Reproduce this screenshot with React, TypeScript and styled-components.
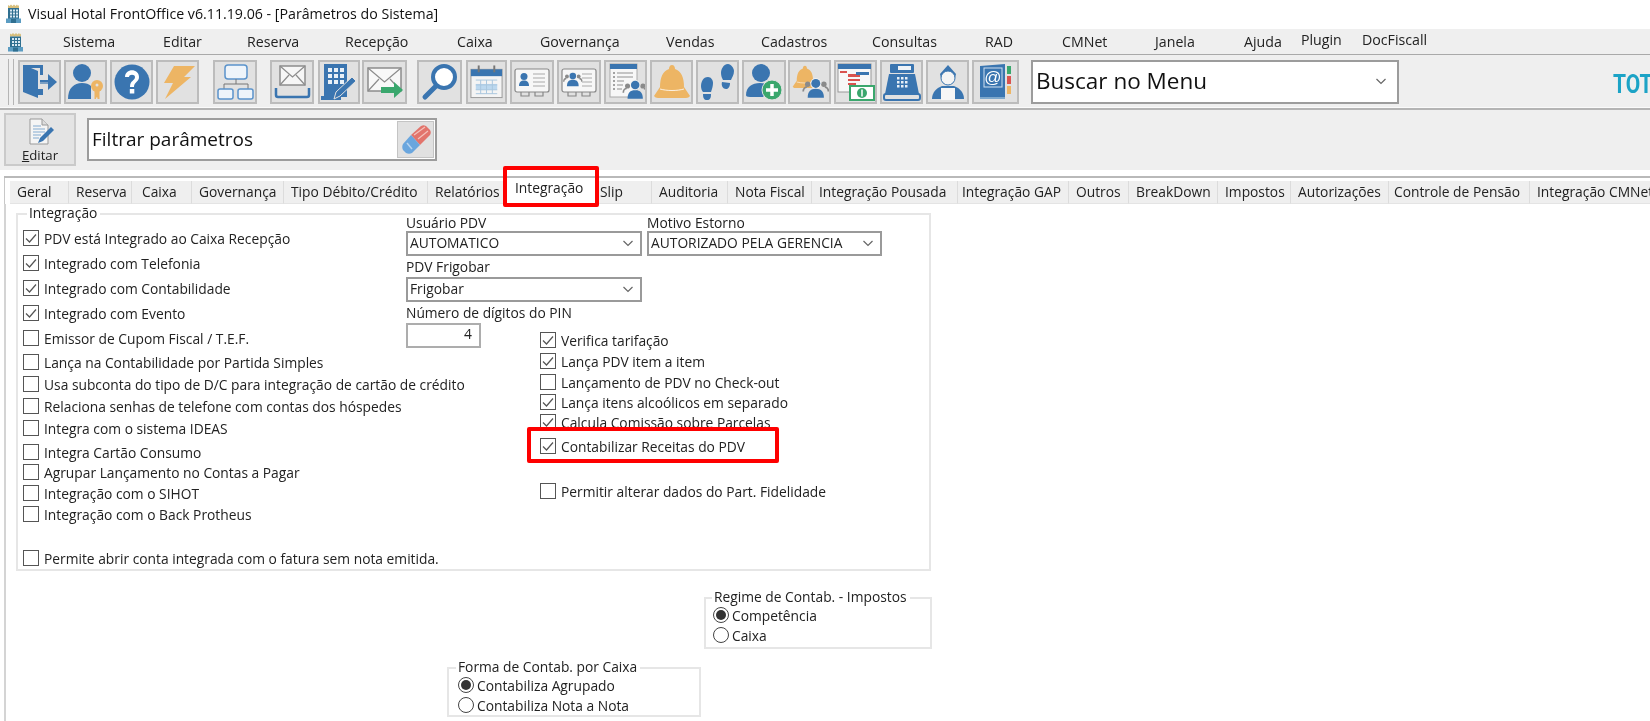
import React from "react";
import styled, { createGlobalStyle } from "styled-components";

const Global = createGlobalStyle`
  html, body { margin: 0; padding: 0; background: #fff; overflow: hidden; }
  body { font-family: "Open Sans", "Noto Sans", sans-serif; color: #222; }
`;

const Screen = styled.div`
  position: relative;
  width: 1650px;
  height: 721px;
  overflow: hidden;
  background: #fff;
  filter: blur(0.3px);
`;

const TitleBar = styled.div`
  height: 29px;
  box-sizing: border-box;
  padding: 0 0 2px 6px;
  display: flex;
  align-items: center;
  gap: 7px;
  font-size: 14.2px;
  color: #111;
  white-space: nowrap;
`;

const MenuBar = styled.div`
  height: 25px;
  display: flex;
  align-items: center;
  background: #efefef;
  border-bottom: 1px solid #a9a9a9;
  padding-left: 8px;
`;

const MenuLogo = styled.div`
  width: 55px;
  display: flex;
`;

const MenuItem = styled.div<{ $w: number; $up?: boolean }>`
  width: ${(p) => p.$w}px;
  flex: none;
  font-size: 14.2px;
  color: #222;
  white-space: nowrap;
  margin-top: ${(p) => (p.$up ? -5 : -1)}px;
`;

const ToolBar = styled.div`
  height: 53px;
  display: flex;
  align-items: center;
  background: #efefef;
  border-bottom: 2px solid #b4b4b4;
  box-shadow: inset 0 -1px 0 #fafafa;
  padding-left: 8px;
`;

const Grip = styled.div`
  width: 4px;
  height: 46px;
  border-left: 1px solid #b5b5b5;
  border-right: 1px solid #b5b5b5;
  margin-right: 4px;
  flex: none;
`;

const ToolButton = styled.div<{ $w?: number; $after?: number }>`
  width: ${(p) => p.$w ?? 43}px;
  height: 44px;
  margin-right: ${(p) => p.$after ?? 3}px;
  flex: none;
  box-sizing: border-box;
  background: #e1e1e1;
  border: 2px solid #bcbcbc;
  display: flex;
  align-items: center;
  justify-content: center;
`;

const Combo = styled.div`
  width: 368px;
  height: 44px;
  margin-left: 9px;
  flex: none;
  box-sizing: border-box;
  background: #fff;
  border: 2px solid #9c9c9c;
  display: flex;
  align-items: center;
  justify-content: space-between;
  padding: 0 10px 2px 3px;
  font-size: 22.5px;
  color: #111;
`;

const Brand = styled.div`
  margin-left: auto;
  width: 37px;
  padding-top: 6px;
  font-family: "Roboto", sans-serif;
  font-weight: 700;
  font-size: 25px;
  line-height: 30px;
  color: #1ca3c6;
  white-space: nowrap;
  transform: scaleX(0.84);
  transform-origin: left center;
`;

const FilterRow = styled.div`
  height: 60px;
  box-sizing: border-box;
  display: flex;
  align-items: center;
  background: #efefef;
  padding: 0 0 1px 4px;
`;

const EditButton = styled.div`
  width: 72px;
  height: 53px;
  box-sizing: border-box;
  background: #e4e4e4;
  border: 2px solid #cacaca;
  display: flex;
  flex-direction: column;
  align-items: center;
  justify-content: center;
  font-size: 13.2px;
  line-height: 16px;
  color: #222;
  flex: none;
`;

const HotKey = styled.span`
  text-decoration: underline;
`;

const FilterBox = styled.div`
  width: 350px;
  height: 43px;
  margin-left: 11px;
  box-sizing: border-box;
  background: #fff;
  border: 2px solid #9c9c9c;
  display: flex;
  align-items: center;
  justify-content: space-between;
  padding: 0 1px 2px 3px;
  font-size: 19px;
  color: #111;
`;

const EraserButton = styled.div`
  width: 37px;
  height: 37px;
  margin-top: 2px;
  background: #e1e1e1;
  border: 1px solid #c4c4c4;
  box-sizing: border-box;
  display: flex;
  align-items: center;
  justify-content: center;
`;

const WhiteGap = styled.div`
  height: 6px;
  background: #fff;
`;

const Rule = styled.div`
  height: 2px;
  background: #b9b9b9;
  margin-left: 4px;
`;

const TabStrip = styled.div`
  height: 26px;
  display: flex;
  align-items: flex-end;
  padding-left: 5px;
  background: #fff;
  border-left: 1px solid #c8c8c8;
  margin-left: 4px;
  box-sizing: border-box;
  overflow: hidden;
`;

const Tab = styled.div<{ $w: number; $active?: boolean; $pad?: number }>`
  width: ${(p) => p.$w}px;
  flex: none;
  box-sizing: border-box;
  height: ${(p) => (p.$active ? 26 : 23)}px;
  padding: ${(p) => (p.$active ? "1px" : "2px")} 0 0 ${(p) => p.$pad ?? 7}px;
  background: ${(p) => (p.$active ? "#fff" : "#efefef")};
  border-right: 1px solid ${(p) => (p.$active ? "#fff" : "#dcdcdc")};
  border-bottom: 1px solid ${(p) => (p.$active ? "#fff" : "#e4e4e4")};
  font-size: 13.8px;
  line-height: 18px;
  color: #222;
  white-space: nowrap;
`;

const TabBody = styled.div`
  height: 517px;
  margin-left: 4px;
  border-left: 2px solid #d4d4d4;
  padding: 9px 0 0 10px;
  box-sizing: border-box;
  background: #fff;
`;

const Group = styled.div<{ $w: number; $h: number; $left?: number; $top?: number }>`
  position: relative;
  width: ${(p) => p.$w}px;
  height: ${(p) => p.$h}px;
  margin-left: ${(p) => p.$left ?? 0}px;
  margin-top: ${(p) => p.$top ?? 0}px;
  box-sizing: border-box;
  border: 2px solid #e6e6e6;
`;

const Legend = styled.div<{ $x?: number }>`
  position: absolute;
  left: ${(p) => p.$x ?? 9}px;
  top: -10px;
  background: #fff;
  padding: 0 3px 0 2px;
  font-size: 13.8px;
  line-height: 16px;
  color: #222;
  white-space: nowrap;
`;

const GroupColumns = styled.div`
  display: flex;
  padding-left: 5px;
`;

const LeftColumn = styled.div`
  width: 383px;
  flex: none;
  padding-top: 13px;
`;

const RightColumn = styled.div`
  flex: 1;
  display: flex;
  flex-direction: column;
  gap: 3px;
  margin-top: -2px;
`;

const Row = styled.div<{ $pitch: number; $gap?: number }>`
  height: 20px;
  margin-bottom: ${(p) => p.$pitch - 20}px;
  display: flex;
  align-items: center;
  gap: ${(p) => p.$gap ?? 5}px;
  font-size: 13.8px;
  color: #222;
  white-space: nowrap;
`;

const Box = styled.span`
  width: 16px;
  height: 16px;
  flex: none;
  box-sizing: border-box;
  border: 1px solid #555;
  background: #fff;
  display: inline-flex;
  align-items: center;
  justify-content: center;
`;

const Dot = styled.span<{ $on?: boolean }>`
  width: 16px;
  height: 16px;
  flex: none;
  box-sizing: border-box;
  border: 1px solid #444;
  border-radius: 50%;
  background: #fff;
  display: inline-flex;
  align-items: center;
  justify-content: center;
  &::after {
    content: "";
    width: 10px;
    height: 10px;
    border-radius: 50%;
    background: ${(p) => (p.$on ? "#333" : "transparent")};
  }
`;

const FieldRow = styled.div`
  display: flex;
  gap: 5px;
`;

const Field = styled.div<{ $w: number }>`
  width: ${(p) => p.$w}px;
`;

const FieldLabel = styled.div<{ $first?: boolean }>`
  margin-top: ${(p) => (p.$first ? 1 : -1)}px;
  padding-bottom: ${(p) => (p.$first ? 0 : 1)}px;
  height: ${(p) => (p.$first ? 17 : 18)}px;
  font-size: 13.8px;
  line-height: 18px;
  color: #222;
  white-space: nowrap;
`;

const Select = styled.div`
  height: 25px;
  box-sizing: border-box;
  border: 2px solid #9a9a9a;
  background: #fff;
  display: flex;
  align-items: center;
  justify-content: space-between;
  padding: 0 6px 2px 2px;
  font-size: 13.8px;
  color: #222;
  white-space: nowrap;
`;

const NumberInput = styled.div`
  width: 75px;
  height: 25px;
  box-sizing: border-box;
  border: 2px solid #adadad;
  background: #fff;
  display: flex;
  align-items: center;
  justify-content: flex-end;
  padding: 0 7px 4px 0;
  font-size: 13.8px;
`;

const SecondChecks = styled.div`
  margin-left: 134px;
  margin-top: -21px;
`;

const LowerArea = styled.div`
  margin-top: 26px;
`;

const GroupBody = styled.div<{ $top: number; $left?: number }>`
  padding: ${(p) => p.$top}px 0 0 ${(p) => p.$left ?? 7}px;
`;

const Callout = styled.div<{ $x: number; $y: number; $w: number; $h: number }>`
  position: absolute;
  left: ${(p) => p.$x}px;
  top: ${(p) => p.$y}px;
  width: ${(p) => p.$w}px;
  height: ${(p) => p.$h}px;
  box-sizing: border-box;
  border: 4px solid #fe0000;
  border-radius: 2px;
  pointer-events: none;
`;

const B = "#3a75b0";
const O = "#edb564";
const G = "#3aa76d";

const Chev = ({ s = 12 }: { s?: number }) => (
  <svg width={s} height={s} viewBox="0 0 12 12" fill="none">
    <path d="M1.500 4l4.500 4.500L10.500 4" stroke="#666" strokeWidth="1.200" />
  </svg>
);

const Tick = () => (
  <svg width="14" height="14" viewBox="0 0 14 14" fill="none">
    <path d="M2 7.500l3.500 3.500L12 3.500" stroke="#555" strokeWidth="1.200" />
  </svg>
);

const Hotel = ({ w = 15, h = 19 }: { w?: number; h?: number }) => (
  <svg width={w} height={h} viewBox="0 0 15 19">
    <path d="M2 4V1l1.500 1L5 .5 6.500 2 8 .5 9.500 2 11 .5 12 2l1-1v3z" fill="#d8bf7c" />
    <rect x="2" y="4" width="11" height="14" fill="#2f6f90" />
    <rect x="0" y="14.500" width="15" height="4.500" fill="#5b9cc2" />
    <rect x="5" y="15" width="5" height="4" fill="#2f6f90" />
    {[5.5, 8.5, 11.5].map((y) =>
      [4, 7, 10].map((x) => <rect key={`${x}-${y}`} x={x} y={y} width="2" height="2" fill="#d8e8f2" />)
    )}
  </svg>
);

const I = ({ children }: { children: React.ReactNode }) => (
  <svg width="38" height="38" viewBox="0 0 38 38">
    {children}
  </svg>
);

const Person = ({ x, y, s = 1, c = B }: { x: number; y: number; s?: number; c?: string }) => (
  <g transform={`translate(${x} ${y}) scale(${s})`}>
    <circle cx="10" cy="7" r="7" fill={c} />
    <path d="M0 26c0-8 4-11 10-11s10 3 10 11z" fill={c} />
  </g>
);

const Trio = ({ x, y, s = 1 }: { x: number; y: number; s?: number }) => (
  <g transform={`translate(${x} ${y}) scale(${s})`}>
    <circle cx="3" cy="7" r="3" fill="#8a8a8a" />
    <circle cx="21" cy="7" r="3" fill="#8a8a8a" />
    <path d="M-2 15c0-3 2-5 4-5M26 15c0-3-2-5-4-5" fill="none" stroke="#8a8a8a" strokeWidth="2" />
    <circle cx="12" cy="6" r="6" fill="#f1f1f1" />
    <circle cx="12" cy="6" r="5" fill={B} />
    <path d="M3 22c0-7 3-10 9-10s9 3 9 10z" fill={B} />
  </g>
);

const Helmet = ({ x, y, s = 1 }: { x: number; y: number; s?: number }) => (
  <g transform={`translate(${x} ${y}) scale(${s})`}>
    <path d="M19 1c2 0 3 2 3 4 6 2 9 8 9 18l6 9c-1 1-2 2-4 2H5c-2 0-3-1-4-2l6-9c0-10 3-16 9-18 0-2 1-4 3-4z" fill={O} />
    <path d="M7 25c7 2 17 2 24 0" fill="none" stroke="#fff" strokeWidth="1" opacity="0.8" />
  </g>
);

const toolIcons: React.ReactNode[] = [
  <I>
    <path d="M2 2h20v10h-3V5H10l7 3v27L2 29z" fill={B} />
    <path d="M17 26h5v6h-5z" fill={B} />
    <path d="M19 17h8v-6l9 8-9 8v-6h-8z" fill={B} />
    <path d="M19 20h8" stroke="#e1e1e1" strokeWidth="0.800" />
  </I>,
  <I>
    <circle cx="15" cy="10" r="9" fill={B} />
    <path d="M1 36c0-11 6-16 14-16 4 0 7 1 9 3v13z" fill={B} />
    <circle cx="30" cy="23" r="6" fill={O} />
    <path d="M27.500 27h5v9h-2v-1.500H29V36h-1.500z" fill={O} />
    <circle cx="30" cy="22" r="1.500" fill="#e1e1e1" />
  </I>,
  <I>
    <circle cx="19" cy="19" r="17.500" fill={B} />
    <path d="M12 14c0-9 14-9 14 0 0 5-5 5-5 10h-4c0-7 5-6 5-10 0-3-6-3-6 0z" fill="#fff" />
    <rect x="16.800" y="26" width="4.500" height="4.500" fill="#fff" />
  </I>,
  <I>
    <path d="M15 3h21L25 14h7L6 36l8-16H5z" fill={O} />
  </I>,
  <I>
    <rect x="9" y="2" width="22" height="14" rx="3" fill="#eef4fa" stroke="#5b93cb" strokeWidth="1.500" />
    <path d="M20 16v5M8 26v-5h24v5" fill="none" stroke="#777" strokeWidth="1" />
    <rect x="2" y="26" width="15" height="10" rx="2" fill="#eef4fa" stroke="#5b93cb" strokeWidth="1.500" />
    <rect x="22" y="26" width="15" height="10" rx="2" fill="#eef4fa" stroke="#5b93cb" strokeWidth="1.500" />
  </I>,
  <I>
    <rect x="7" y="3" width="25" height="19" fill="#f6f6f6" stroke="#8c8c8c" strokeWidth="1.500" />
    <path d="M7 3l12.500 11L32 3M7 22l9-10M32 22l-9-10" fill="none" stroke="#8c8c8c" strokeWidth="1.200" />
    <path d="M3 25v7a2 2 0 0 0 2 2h29a2 2 0 0 0 2-2v-7" fill="none" stroke={B} strokeWidth="2.500" />
  </I>,
  <I>
    <rect x="4" y="1" width="23" height="33" fill={B} />
    <rect x="1" y="33" width="20" height="4" fill={B} />
    {[5, 11, 17].map((y) => [8, 14, 20].map((x) => <rect key={`${x}${y}`} x={x} y={y} width="4" height="4" fill="#e8f0f7" />))}
    <path d="M14 36l2-7 16-15 4 4-16 15z" fill={B} stroke="#e1e1e1" strokeWidth="1" />
  </I>,
  <I>
    <rect x="2" y="5" width="33" height="23" fill="#f8f8f8" stroke="#8c8c8c" strokeWidth="1.500" />
    <path d="M2 5l16.500 14L35 5M2 28l11-12M35 28L24 16" fill="none" stroke="#8c8c8c" strokeWidth="1.200" />
    <path d="M15 24h13v-5l9 8-9 8v-5H15z" fill={G} />
  </I>,
  <I>
    <circle cx="23" cy="14" r="11" fill="#fff" stroke={B} strokeWidth="4" />
    <path d="M15 23L4 34" stroke={B} strokeWidth="5" strokeLinecap="round" />
  </I>,
  <I>
    <rect x="3" y="6" width="32" height="29" fill="#f4f4f4" stroke="#999" />
    <rect x="3" y="6" width="32" height="7" fill={B} />
    <rect x="10" y="2" width="2" height="7" fill="#777" />
    <rect x="26" y="2" width="2" height="7" fill="#777" />
    <rect x="8" y="21" width="22" height="6" fill="#bcd8ef" />
    <path d="M8 17h22M8 22h22M8 27h22M8 31h22M13 17v14M19 17v14M25 17v14" stroke="#a9c6de" strokeWidth="1" />
  </I>,
  <I>
    <rect x="2" y="6" width="34" height="23" rx="2" fill="#f7f7f7" stroke="#888" strokeWidth="1.200" />
    <Person x={6} y={10} s={0.5} />
    <path d="M20 11h12M20 15h12M20 19h12M20 23h12" stroke="#c4c4c4" strokeWidth="1.500" />
    <path d="M8 29v4h8v-4M22 29v4h8v-4" fill="none" stroke="#888" strokeWidth="1.200" />
  </I>,
  <I>
    <rect x="2" y="6" width="34" height="23" rx="2" fill="#f7f7f7" stroke="#888" strokeWidth="1.200" />
    <Trio x={5} y={9} s={0.65} />
    <path d="M22 11h10M22 15h10M22 19h10M22 23h10" stroke="#c4c4c4" strokeWidth="1.500" />
    <path d="M8 29v4h8v-4M22 29v4h8v-4" fill="none" stroke="#888" strokeWidth="1.200" />
  </I>,
  <I>
    <rect x="3" y="1" width="27" height="33" fill="#f7f7f7" stroke="#aaa" />
    <rect x="3" y="1" width="27" height="5" fill={B} />
    <path d="M10 10h16M10 14h16M10 18h7M10 22h6M10 26h5" stroke="#b4b4b4" strokeWidth="1.500" />
    <path d="M6 10h2M6 14h2M6 18h2M6 22h2M6 26h2" stroke="#888" strokeWidth="1.500" />
    <Trio x={18} y={17} s={0.85} />
  </I>,
  <I>
    <Helmet x={0} y={1} />
  </I>,
  <I>
    <path d="M9 14c-5 0-7 5-7 9 0 3 1 5 2 6h8c1-3 2-6 2-9 0-3-2-6-5-6z" fill={B} />
    <path d="M4 31h8c0 4-1 6-4 6s-4-2-4-6z" fill={B} />
    <path d="M29 1c-5 0-7 6-7 9 0 3 1 5 2 7h8c1-3 3-5 3-9 0-3-3-7-6-7z" fill={B} />
    <path d="M23 19l8 1c0 4-2 6-4 6-3 0-5-3-4-7z" fill={B} />
  </I>,
  <I>
    <circle cx="16" cy="10" r="9" fill={B} />
    <path d="M1 32c0-8 6-12 14-12 5 0 9 2 11 4l-8 10H5c-3 0-4-1-4-2z" fill={B} />
    <circle cx="27" cy="27" r="10" fill={G} stroke="#e1e1e1" strokeWidth="1" />
    <path d="M21 27h12M27 21v12" stroke="#fff" strokeWidth="3.500" />
  </I>,
  <I>
    <Helmet x={1} y={2} s={0.68} />
    <Trio x={14} y={15} s={0.9} />
  </I>,
  <I>
    <rect x="1" y="1" width="33" height="28" fill="#f7f7f7" stroke="#999" />
    <rect x="1" y="1" width="33" height="5" fill={B} />
    <rect x="3" y="8" width="7" height="2" fill="#d9534f" />
    <rect x="11" y="11" width="12" height="3" fill="#d9534f" />
    <rect x="19" y="9" width="13" height="3" fill={B} />
    <rect x="11" y="16" width="12" height="2" fill="#d9534f" />
    <rect x="11" y="20" width="8" height="2" fill="#d9534f" />
    <rect x="13" y="23" width="24" height="14" fill="#fff" stroke={G} strokeWidth="2" />
    <circle cx="25" cy="30" r="5" fill={G} />
    <path d="M25 26.500v7" stroke="#fff" strokeWidth="1.500" />
  </I>,
  <I>
    <rect x="7" y="1" width="24" height="9" rx="1" fill={B} />
    <rect x="15" y="3" width="13" height="4" fill="#eef3f8" />
    <path d="M6 11h26l4 20H2z" fill={B} />
    {[14, 18, 22].map((y) => [14, 18, 22].map((x) => <rect key={`${x}_${y}`} x={x} y={y} width="2.500" height="2.500" fill="#e8f0f7" />))}
    <rect x="1" y="31" width="36" height="6" rx="2" fill="none" stroke={B} strokeWidth="2" />
  </I>,
  <I>
    <path d="M11 11l8-9 8 9-1 4H12z" fill={B} />
    <circle cx="19" cy="15" r="7" fill="#f4f4f4" stroke={B} strokeWidth="1" />
    <path d="M3 36c0-6 4-11 10-13h12c6 2 10 7 10 13z" fill={B} />
    <path d="M12 25h14v12H12z" fill="#f6f6f6" />
  </I>,
  <I>
    <path d="M3 3l25-2v33H3z" fill={B} />
    <rect x="3" y="34" width="25" height="2" fill="#7ea8cc" />
    <rect x="7" y="5" width="18" height="19" fill="none" stroke="#cfe0ef" strokeWidth="1" />
    <text x="16" y="20" textAnchor="middle" fontFamily="Liberation Sans, sans-serif" fontSize="17" fill="#fff">
      @
    </text>
    <rect x="30" y="3" width="4" height="8" fill={G} />
    <rect x="30" y="13" width="4" height="8" fill="#d9534f" />
    <rect x="30" y="23" width="4" height="8" fill={O} />
  </I>,
];

const toolSpec: { w?: number; after?: number }[] = [
  { w: 43 }, { w: 43 }, { w: 43 }, { w: 43, after: 14 }, { w: 44, after: 13 }, { w: 44, after: 4 },
  { w: 42, after: 2 }, { w: 45, after: 10 }, { w: 45, after: 4 }, { w: 41, after: 3 }, { w: 44, after: 3 },
  { w: 44 }, { w: 43 }, { w: 43 }, { w: 43 }, { w: 44, after: 2 }, { w: 43 }, { w: 43 }, { w: 43 }, { w: 43 }, { w: 47, after: 3 },
];

const menus: [string, number, boolean?][] = [
  ["Sistema", 100], ["Editar", 84], ["Reserva", 98], ["Recepção", 112], ["Caixa", 83], ["Governança", 126],
  ["Vendas", 95], ["Cadastros", 111], ["Consultas", 113], ["RAD", 77], ["CMNet", 93], ["Janela", 89],
  ["Ajuda", 57], ["Plugin", 61, true], ["DocFiscall", 80, true],
];

const tabs: [string, number, number?][] = [
  ["Geral", 59], ["Reserva", 63], ["Caixa", 60, 10], ["Governança", 92], ["Tipo Débito/Crédito", 144], ["Relatórios", 76],
  ["Integração", 92, 11], ["Slip", 56, 4], ["Auditoria", 76], ["Nota Fiscal", 84], ["Integração Pousada", 146], ["Integração GAP", 111, 4],
  ["Outros", 60], ["BreakDown", 89], ["Impostos", 73], ["Autorizações", 98], ["Controle de Pensão", 141, 5], ["Integração CMNet", 130],
];

const Check = ({ label, on, pitch }: { label: string; on?: boolean; pitch: number }) => (
  <Row $pitch={pitch}>
    <Box>{on && <Tick />}</Box>
    {label}
  </Row>
);

const Radio = ({ label, on, pitch }: { label: string; on?: boolean; pitch: number }) => (
  <Row $pitch={pitch} $gap={3}>
    <Dot $on={on} />
    {label}
  </Row>
);

const leftChecks: [string, boolean, number][] = [
  ["PDV está Integrado ao Caixa Recepção", true, 25],
  ["Integrado com Telefonia", true, 25],
  ["Integrado com Contabilidade", true, 25],
  ["Integrado com Evento", true, 25],
  ["Emissor de Cupom Fiscal / T.E.F.", false, 24],
  ["Lança na Contabilidade por Partida Simples", false, 22],
  ["Usa subconta do tipo de D/C para integração de cartão de crédito", false, 22],
  ["Relaciona senhas de telefone com contas dos hóspedes", false, 22],
  ["Integra com o sistema IDEAS", false, 24],
  ["Integra Cartão Consumo", false, 20],
  ["Agrupar Lançamento no Contas a Pagar", false, 21],
  ["Integração com o SIHOT", false, 21],
  ["Integração com o Back Protheus", false, 44],
  ["Permite abrir conta integrada com o fatura sem nota emitida.", false, 20],
];

const rightChecks: [string, boolean, number][] = [
  ["Verifica tarifação", true, 21],
  ["Lança PDV item a item", true, 21],
  ["Lançamento de PDV no Check-out", false, 20],
  ["Lança itens alcoólicos em separado", true, 20],
  ["Calcula Comissão sobre Parcelas", true, 24],
  ["Contabilizar Receitas do PDV", true, 45],
  ["Permitir alterar dados do Part. Fidelidade", false, 20],
];

export default function App() {
  return (
    <Screen>
      <Global />
      <TitleBar>
        <Hotel />
        Visual Hotal FrontOffice v6.11.19.06 - [Parâmetros do Sistema]
      </TitleBar>
      <MenuBar>
        <MenuLogo>
          <Hotel w={15} h={20} />
        </MenuLogo>
        {menus.map(([m, w, up]) => (
          <MenuItem key={m} $w={w} $up={up}>
            {m}
          </MenuItem>
        ))}
      </MenuBar>
      <ToolBar>
        <Grip />
        {toolIcons.map((ic, i) => (
          <ToolButton key={i} $w={toolSpec[i].w} $after={toolSpec[i].after}>
            {ic}
          </ToolButton>
        ))}
        <Combo>
          Buscar no Menu
          <Chev />
        </Combo>
        <Brand>TOT</Brand>
      </ToolBar>
      <FilterRow>
        <EditButton>
          <svg width="30" height="30" viewBox="0 0 30 30">
            <path d="M5 2h12l6 6v19H5z" fill="#f5f5f5" stroke="#999" />
            <path d="M17 2v6h6" fill="#ddd" stroke="#999" />
            <path d="M8 9h8M8 12h12M8 15h12M8 18h8M8 21h6" stroke="#a9c4dd" strokeWidth="1.300" />
            <path d="M13 26l2-5 11-11 3 3-11 11z" fill={B} />
          </svg>
          <span>
            <HotKey>E</HotKey>ditar
          </span>
        </EditButton>
        <FilterBox>
          Filtrar parâmetros
          <EraserButton>
            <svg width="32" height="32" viewBox="0 0 32 32">
              <path d="M11 11L21 2c2-1 3-1 5 0l4 4c1 2 1 3 0 5L20 21z" fill="#e2746c" />
              <path d="M3 20l8-9 9 10-8 8c-2 1-4 1-6 0l-3-3c-1-2-1-4 0-6z" fill="#6aa6de" />
              <path d="M14 11l11-8M18 15l10-8" stroke="#f4c2bc" strokeWidth="1.200" />
              <path d="M7 19l5 6" stroke="#b7d4f0" strokeWidth="1.500" />
            </svg>
          </EraserButton>
        </FilterBox>
      </FilterRow>
      <WhiteGap />
      <Rule />
      <TabStrip>
        {tabs.map(([t, w, pad]) => (
          <Tab key={t} $w={w} $active={t === "Integração"} $pad={pad}>
            {t}
          </Tab>
        ))}
      </TabStrip>
      <TabBody>
        <Group $w={915} $h={358}>
          <Legend>Integração</Legend>
          <GroupColumns>
            <LeftColumn>
              {leftChecks.map(([l, on, p]) => (
                <Check key={l} label={l} on={on} pitch={p} />
              ))}
            </LeftColumn>
            <RightColumn>
              <FieldRow>
                <Field $w={236}>
                  <FieldLabel $first>Usuário PDV</FieldLabel>
                  <Select>
                    AUTOMATICO
                    <Chev />
                  </Select>
                </Field>
                <Field $w={235}>
                  <FieldLabel $first>Motivo Estorno</FieldLabel>
                  <Select>
                    AUTORIZADO PELA GERENCIA
                    <Chev />
                  </Select>
                </Field>
              </FieldRow>
              <Field $w={236}>
                <FieldLabel>PDV Frigobar</FieldLabel>
                <Select>
                  Frigobar
                  <Chev />
                </Select>
              </Field>
              <Field $w={236}>
                <FieldLabel>Número de dígitos do PIN</FieldLabel>
                <NumberInput>4</NumberInput>
              </Field>
              <SecondChecks>
                {rightChecks.map(([l, on, p]) => (
                  <Check key={l} label={l} on={on} pitch={p} />
                ))}
              </SecondChecks>
            </RightColumn>
          </GroupColumns>
        </Group>
        <LowerArea>
          <Group $w={228} $h={52} $left={688}>
            <Legend $x={6}>Regime de Contab. - Impostos</Legend>
            <GroupBody $top={6}>
              <Radio label="Competência" on pitch={20} />
              <Radio label="Caixa" pitch={20} />
            </GroupBody>
          </Group>
          <Group $w={254} $h={50} $left={431} $top={18}>
            <Legend $x={7}>Forma de Contab. por Caixa</Legend>
            <GroupBody $top={6} $left={9}>
              <Radio label="Contabiliza Agrupado" on pitch={20} />
              <Radio label="Contabiliza Nota a Nota" pitch={20} />
            </GroupBody>
          </Group>
        </LowerArea>
      </TabBody>
      <Callout $x={503} $y={166} $w={96} $h={41} />
      <Callout $x={527} $y={427} $w={252} $h={36} />
    </Screen>
  );
}
